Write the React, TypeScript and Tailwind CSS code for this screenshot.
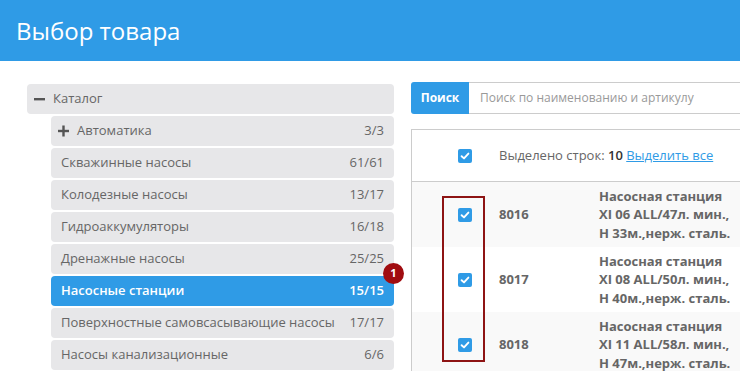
const categories = [
  { name: "Скважинные насосы", count: "61/61" },
  { name: "Колодезные насосы", count: "13/17" },
  { name: "Гидроаккумуляторы", count: "16/18" },
  { name: "Дренажные насосы", count: "25/25" },
  { name: "Насосные станции", count: "15/15", active: true },
  { name: "Поверхностные самовсасывающие насосы", count: "17/17" },
  { name: "Насосы канализационные", count: "6/6" },
];

const products = [
  { code: "8016", lines: ["Насосная станция", "XI 06 ALL/47л. мин.,", "H 33м.,нерж. сталь."] },
  { code: "8017", lines: ["Насосная станция", "XI 08 ALL/50л. мин.,", "H 40м.,нерж. сталь."] },
  { code: "8018", lines: ["Насосная станция", "XI 11 ALL/58л. мин.,", "H 47м.,нерж. сталь."] },
];

function Checkbox() {
  return (
    <span className="flex h-[14px] w-[14px] items-center justify-center rounded-[2px] bg-[#2f9be6]">
      <svg width="10" height="10" viewBox="0 0 10 10" fill="none">
        <path d="M1.6 5.2 L4 7.4 L8.4 2.6" stroke="white" strokeWidth="1.9" strokeLinecap="round" strokeLinejoin="round" />
      </svg>
    </span>
  );
}

export default function App() {
  return (
    <div className="h-[371px] w-[740px] overflow-hidden bg-white font-['Open_Sans',sans-serif]">
      {/* Header */}
      <header className="flex h-[61px] items-center bg-[#2f9be6] px-[16px] text-[24px] text-white">
        Выбор товара
      </header>

      <div className="flex pl-[27px]">
        {/* Catalog tree */}
        <aside className="mt-[23px] w-[367px] shrink-0 text-[13px] text-[#666]">
          <div className="flex h-[30px] items-center rounded-[4px] bg-[#e7e7e9] pl-[6px]">
            <svg width="12" height="12" viewBox="0 0 12 12" className="mr-[7px] ml-[1px]">
              <rect x="0" y="5" width="11" height="2.4" fill="#555" />
            </svg>
            Каталог
          </div>
          <div className="ml-[24px] mt-[2px] flex flex-col gap-[2px]">
            <div className="flex h-[30px] items-center justify-between rounded-[4px] bg-[#e7e7e9] pl-[6px] pr-[10px]">
              <span className="flex items-center">
                <svg width="12" height="12" viewBox="0 0 12 12" className="mr-[7px] ml-[1px]">
                  <rect x="0" y="4.8" width="11" height="2.4" fill="#555" />
                  <rect x="4.3" y="0.5" width="2.4" height="11" fill="#555" />
                </svg>
                Автоматика
              </span>
              <span>3/3</span>
            </div>
            {categories.map((c) => (
              <div
                key={c.name}
                className={
                  c.active
                    ? "relative flex h-[30px] items-center justify-between rounded-[4px] bg-[#2f9be6] pl-[10px] pr-[10px] font-semibold text-white"
                    : "flex h-[30px] items-center justify-between rounded-[4px] bg-[#e7e7e9] pl-[10px] pr-[10px]"
                }
              >
                <span>{c.name}</span>
                <span>{c.count}</span>
                {c.active && (
                  <span className="absolute -right-[10px] -top-[13px] flex h-[21px] w-[21px] items-center justify-center rounded-full bg-[#a00c10] text-[11px] font-bold text-white">
                    1
                  </span>
                )}
              </div>
            ))}
          </div>
        </aside>

        {/* Products */}
        <main className="ml-[17px] mt-[21px] w-[420px] shrink-0">
          <div className="flex h-[32px]">
            <button className="w-[58px] rounded-l-[3px] bg-[#2f9be6] text-[12px] font-bold text-white">
              Поиск
            </button>
            <div className="flex flex-1 items-center border border-l-0 border-[#ccc] pl-[11px] text-[12px] text-[#999]">
              Поиск по наименованию и артикулу
            </div>
          </div>

          <div className="relative mt-[15px] border-l border-t border-[#ccc] text-[13px] text-[#666]">
            <div className="flex h-[52px] items-center border-b border-[#ccc]">
              <div className="w-[87px] pl-[46px]">
                <Checkbox />
              </div>
              <div>
                Выделено строк: <span className="font-semibold text-[#333]">10</span>{" "}
                <span className="text-[#2f9be6] underline">Выделить все</span>
              </div>
            </div>
            {products.map((p, i) => (
              <div
                key={p.code}
                className={`flex h-[65px] items-center font-bold ${i % 2 === 0 ? "bg-[#f9f9f9]" : "bg-white"}`}
              >
                <div className="w-[87px] pl-[46px]">
                  <Checkbox />
                </div>
                <div className="w-[100px]">{p.code}</div>
                <div className="leading-[18.5px] whitespace-nowrap">
                  {p.lines.map((l) => (
                    <div key={l}>{l}</div>
                  ))}
                </div>
              </div>
            ))}
            <div className="absolute left-[30px] top-[66px] h-[166px] w-[43px] border-2 border-[#8e1414]" />
          </div>
        </main>
      </div>
    </div>
  );
}
